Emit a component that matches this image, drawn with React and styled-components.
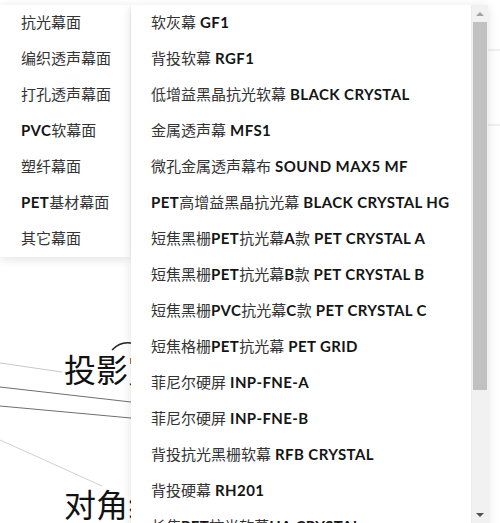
import styled, { createGlobalStyle } from "styled-components";

const GlobalStyle = createGlobalStyle`
  html, body {
    margin: 0;
    padding: 0;
    background: #fff;
  }
  body {
    font-family: Lato, "Noto Sans CJK SC", sans-serif;
  }
`;

const Page = styled.div`
  position: relative;
  width: 500px;
  height: 523px;
  overflow: hidden;
  background: #fff;
`;

const Backdrop = styled.div`
  position: absolute;
  inset: 0;
`;

const Label = styled.div`
  position: absolute;
  left: ${(p) => p.x}px;
  top: ${(p) => p.y}px;
  font-family: "Noto Sans CJK SC", sans-serif;
  font-size: 32px;
  line-height: 1;
  color: #111;
  white-space: nowrap;
`;

const Dropdown = styled.div`
  position: absolute;
  top: 5px;
  left: 0;
  display: flex;
  align-items: flex-start;
  gap: 1px;
`;

const MainList = styled.ul`
  list-style: none;
  margin: 0;
  padding: 0;
  width: 130px;
  background: #fff;
  box-shadow: 0 2px 10px rgba(0, 0, 0, 0.12);
`;

const SubPanel = styled.div`
  display: flex;
  width: 357px;
  height: 530px;
  background: #fff;
  box-shadow: 0 2px 10px rgba(0, 0, 0, 0.12);
  overflow: hidden;
`;

const SubList = styled.ul`
  list-style: none;
  margin: 0;
  padding: 0;
  flex: 1;
`;

const Item = styled.li`
  box-sizing: border-box;
  display: flex;
  align-items: center;
  height: 36px;
  padding: 0 0 3px ${(p) => p.$indent}px;
  font-size: 15px;
  color: #333;
  white-space: nowrap;
  cursor: pointer;
`;

const Latin = styled.b`
  font-family: Lato, sans-serif;
  font-weight: 700;
  letter-spacing: 0.4px;
  color: #151515;
  white-space: pre;
`;

const ScrollBar = styled.div`
  display: flex;
  flex-direction: column;
  align-items: center;
  width: 16px;
  height: 518px;
  background: #f1f1f1;
  border-left: 1px solid #ececec;
`;

const Arrow = styled.div`
  flex-shrink: 0;
  width: 16px;
  height: 17px;
  display: flex;
  align-items: center;
  justify-content: center;
  &::before {
    content: "";
    border-left: 4px solid transparent;
    border-right: 4px solid transparent;
    ${(p) =>
      p.$down
        ? "border-top: 4px solid #505050;"
        : "border-bottom: 4px solid #a3a3a3;"}
  }
`;

const Thumb = styled.div`
  width: 14px;
  height: 368px;
  background: #c1c1c1;
`;

const Spacer = styled.div`
  flex: 1;
`;

const mainItems = [
  "抗光幕面",
  "编织透声幕面",
  "打孔透声幕面",
  "PVC软幕面",
  "塑纤幕面",
  "PET基材幕面",
  "其它幕面",
];

const subItems = [
  "软灰幕 GF1",
  "背投软幕 RGF1",
  "低增益黑晶抗光软幕 BLACK CRYSTAL",
  "金属透声幕 MFS1",
  "微孔金属透声幕布 SOUND MAX5 MF",
  "PET高增益黑晶抗光幕 BLACK CRYSTAL HG",
  "短焦黑栅PET抗光幕A款 PET CRYSTAL A",
  "短焦黑栅PET抗光幕B款 PET CRYSTAL B",
  "短焦黑栅PVC抗光幕C款 PET CRYSTAL C",
  "短焦格栅PET抗光幕 PET GRID",
  "菲尼尔硬屏 INP-FNE-A",
  "菲尼尔硬屏 INP-FNE-B",
  "背投抗光黑栅软幕 RFB CRYSTAL",
  "背投硬幕 RH201",
  "长焦PET抗光软幕HA CRYSTAL",
];

function MixedText({ text }) {
  const parts = text.split(/([A-Za-z0-9\- ]+)/).filter(Boolean);
  return parts.map((part, i) =>
    /[A-Za-z0-9]/.test(part) ? (
      <Latin key={i}>{part}</Latin>
    ) : (
      <span key={i}>{part}</span>
    )
  );
}

function Diagram() {
  return (
    <Backdrop>
      <svg width="500" height="523" style={{ position: "absolute", inset: 0 }}>
        <line x1="0" y1="363" x2="62" y2="372" stroke="#c8c8c8" strokeWidth="1" />
        <line x1="0" y1="387" x2="131" y2="402" stroke="#6f6f6f" strokeWidth="1" />
        <line x1="0" y1="406" x2="131" y2="418" stroke="#6f6f6f" strokeWidth="1" />
        <line x1="0" y1="440" x2="102" y2="486" stroke="#cfcfcf" strokeWidth="1" />
        <path d="M112 350 Q122 340 134 344" fill="none" stroke="#222" strokeWidth="1.5" />
        <line x1="488" y1="50" x2="500" y2="50" stroke="#e2e2e2" strokeWidth="1" />
        <line x1="488" y1="125" x2="500" y2="125" stroke="#e2e2e2" strokeWidth="1" />
      </svg>
      <Label x={64} y={352}>投影宽</Label>
      <Label x={64} y={487}>对角线</Label>
    </Backdrop>
  );
}

export default function App() {
  return (
    <Page>
      <GlobalStyle />
      <Diagram />
      <Dropdown>
        <MainList>
          {mainItems.map((t) => (
            <Item key={t} $indent={21}>
              <MixedText text={t} />
            </Item>
          ))}
        </MainList>
        <SubPanel>
          <SubList>
            {subItems.map((t) => (
              <Item key={t} $indent={20}>
                <MixedText text={t} />
              </Item>
            ))}
          </SubList>
          <ScrollBar>
            <Arrow />
            <Thumb />
            <Spacer />
            <Arrow $down />
          </ScrollBar>
        </SubPanel>
      </Dropdown>
    </Page>
  );
}
